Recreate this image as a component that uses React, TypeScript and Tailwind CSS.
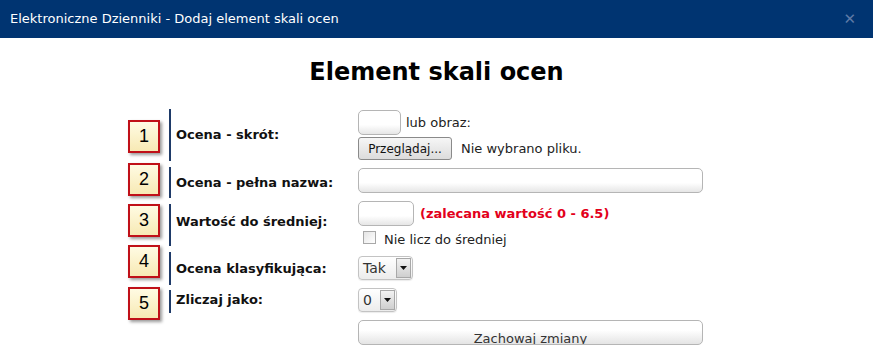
const verdana = { fontFamily: '"DejaVu Sans", Verdana, sans-serif' };

// numbered marker hanging at the left of a form row; it overlaps the row edges like in the original
function Badge({ n, top }: { n: number; top: string }) {
  return (
    <div className={`absolute left-[2px] ${top} w-[32px] h-[33px] border-2 border-[#c01018] bg-gradient-to-b from-[#fffbe3] to-[#f7e9b4] shadow-[2px_2px_3px_rgba(0,0,0,0.4)] flex items-center justify-center text-[18px] text-black font-['Liberation_Sans',Arial,sans-serif]`}>
      {n}
    </div>
  );
}

function Label({ text, pad = '' }: { text: string; pad?: string }) {
  return (
    <div className={`w-[189px] h-full border-l-2 border-[#1e3a68] pl-[5px] flex items-center ${pad}`}>
      <span className="text-[13px] font-bold text-[#111]">{text}</span>
    </div>
  );
}

function TextBox({ w }: { w: string }) {
  return (
    <div className={`${w} h-[25px] rounded-[5px] border border-[#b5b5b5] bg-gradient-to-b from-white from-60% to-[#e6e6e6]`} />
  );
}

function Select({ value, w }: { value: string; w: string }) {
  return (
    <div className={`${w} h-[24px] rounded-[4px] border border-[#c3c3c3] bg-gradient-to-b from-white to-[#ececec] flex items-center justify-between pl-[4px] pr-[1px] shadow-[0_1px_1px_rgba(0,0,0,0.08)]`}>
      <span className="text-[14px] text-[#333]">{value}</span>
      <div className="w-[15px] h-[20px] border border-[#a8a8a8] bg-gradient-to-b from-[#f2f2f2] to-[#cfcfcf] flex items-center justify-center">
        <svg width="7" height="4" viewBox="0 0 7 4">
          <path d="M0 0h7L3.5 4z" fill="#111" />
        </svg>
      </div>
    </div>
  );
}

export default function App() {
  return (
    <div className="w-[873px] h-[362px] bg-white overflow-hidden" style={verdana}>
      <div className="h-[38px] bg-[#003471] flex items-center justify-between pl-[10px] pr-[17px]">
        <span className="text-[13px] text-white">
          Elektroniczne Dzienniki - Dodaj element skali ocen
        </span>
        <span className="text-[15px] font-bold text-[#5d7aa6] leading-none">✕</span>
      </div>

      <h1 className="mt-[20px] text-center text-[24px] font-bold text-black leading-[29px]">
        Element skali ocen
      </h1>

      <div className="mx-auto w-[621px] mt-[22px] flex flex-col">
        {/* row 1 */}
        <div className="relative flex items-start h-[52px] pl-[43px]">
          <Badge n={1} top="top-[11px]" />
          <Label text="Ocena - skrót:" />
          <div className="flex flex-col gap-[2px] mt-[1px]">
            <div className="flex items-center gap-[5px]">
              <TextBox w="w-[43px]" />
              <span className="text-[13px] text-[#222]">lub obraz:</span>
            </div>
            <div className="flex items-center gap-[9px]">
              <div className="w-[94px] h-[23px] rounded-[3px] border border-[#8a8a8a] bg-gradient-to-b from-[#f6f6f6] to-[#dcdcdc] flex items-center justify-center text-[12px] text-[#111]">
                Przeglądaj...
              </div>
              <span className="text-[13px] text-[#222]">Nie wybrano pliku.</span>
            </div>
          </div>
        </div>

        {/* row 2 */}
        <div className="relative flex items-start h-[31px] pl-[43px] mt-[6px]">
          <Badge n={2} top="-top-[4px]" />
          <Label text="Ocena - pełna nazwa:" />
          <div className="mt-[1px]">
            <TextBox w="w-[345px]" />
          </div>
        </div>

        {/* row 3 */}
        <div className="relative flex items-start h-[42px] pl-[43px] mt-[6px]">
          <Badge n={3} top="top-0" />
          <Label text="Wartość do średniej:" pad="pb-[6px]" />
          <div className="flex flex-col -mt-[3px]">
            <div className="flex items-center gap-[6px]">
              <TextBox w="w-[56px]" />
              <span className="text-[13px] font-bold text-[#e3001b]">(zalecana wartość 0 - 6.5)</span>
            </div>
            <div className="flex items-center gap-[8px] pl-[5px] mt-[4px] h-[14px]">
              <div className="w-[13px] h-[13px] border border-[#a8a8a8] bg-gradient-to-br from-[#e4e4e4] to-white" />
              <span className="text-[13px] text-[#222] leading-[14px] mt-[5px]">Nie licz do średniej</span>
            </div>
          </div>
        </div>

        {/* row 4 */}
        <div className="relative flex items-start h-[33px] pl-[43px] mt-[6px]">
          <Badge n={4} top="-top-[7px]" />
          <Label text="Ocena klasyfikująca:" />
          <div className="mt-[4px]">
            <Select value="Tak" w="w-[55px]" />
          </div>
        </div>

        {/* row 5 */}
        <div className="relative flex items-start h-[23px] pl-[43px] mt-[5px]">
          <Badge n={5} top="-top-[3px]" />
          <Label text="Zliczaj jako:" pad="pb-[4px]" />
          <div className="-mt-[2px]">
            <Select value="0" w="w-[39px]" />
          </div>
        </div>

        {/* save */}
        <div className="flex mt-[7px] pl-[232px]">
          <div className="w-[345px] h-[25px] rounded-[5px] border border-[#b5b5b5] bg-gradient-to-b from-white from-40% to-[#e4e4e4] flex items-end justify-center overflow-hidden">
            <span className="text-[13px] text-[#333] leading-[16px] -mb-[3px]">Zachowaj zmiany</span>
          </div>
        </div>
      </div>
    </div>
  );
}
